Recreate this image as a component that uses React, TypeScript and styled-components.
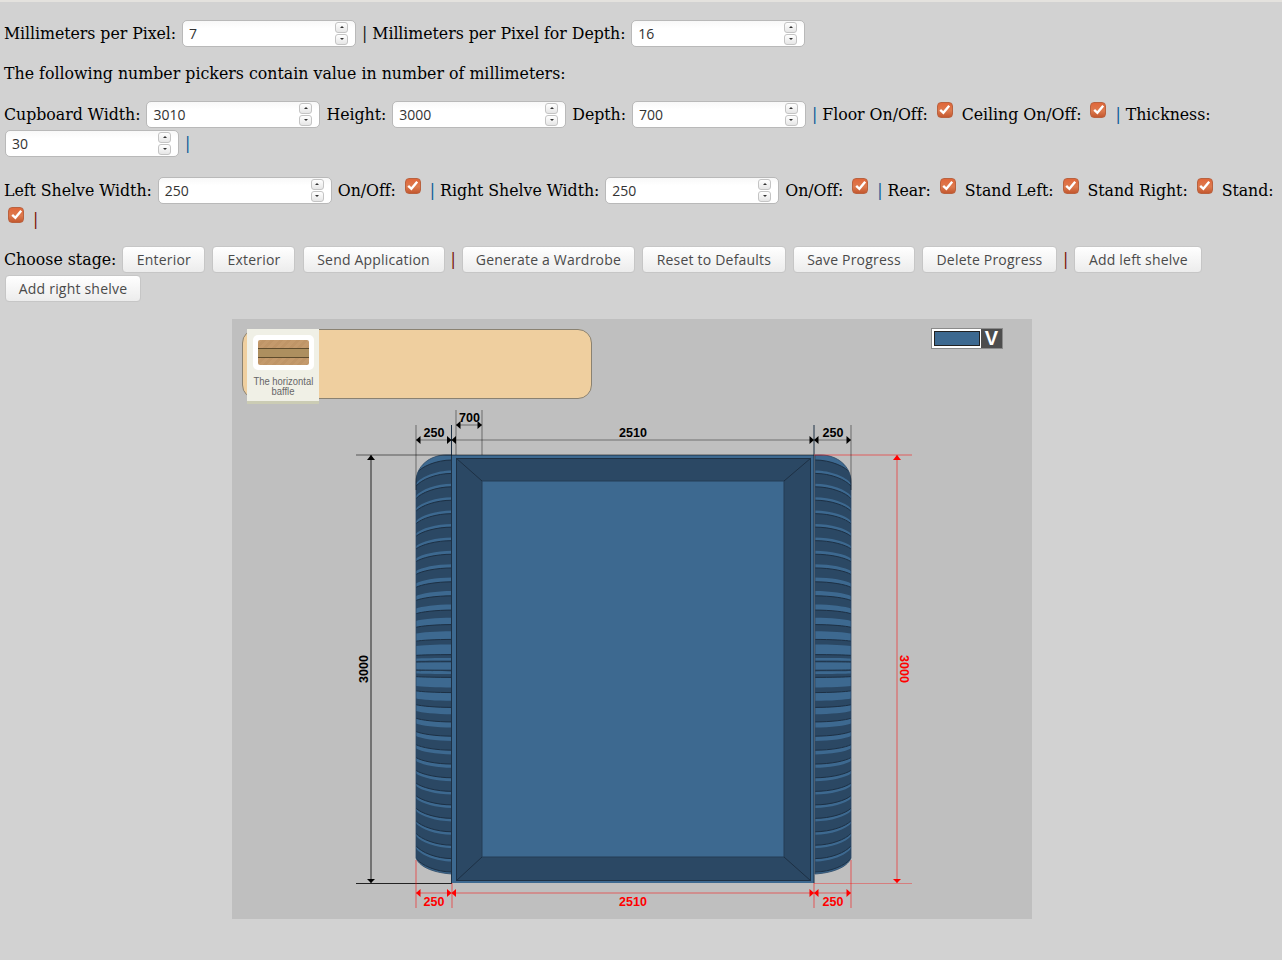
import React from "react";
import styled, { createGlobalStyle } from "styled-components";

const Global = createGlobalStyle`
  html, body { margin: 0; padding: 0; background: #d2d2d2; }
  body { border-top: 2px solid #e4e2de; }
`;

const Page = styled.div`
  min-height: 958px;
  padding: 17px 0 0 4px;
  box-sizing: border-box;
  font-family: "DejaVu Serif", serif;
  font-size: 15.8px;
  color: #000;
`;

const Row = styled.div<{ $gap: number; $track?: number }>`
  margin-bottom: ${(p) => p.$gap}px;
  line-height: 29px;
  letter-spacing: ${(p) => p.$track ?? 0}px;
`;

const Sep = styled.span<{ $tone?: "red" | "dark" }>`
  color: ${(p) => (p.$tone === "red" ? "#7a1408" : p.$tone === "dark" ? "#222" : "#0b5c99")};
`;

const Field = styled.span`
  display: inline-flex;
  align-items: center;
  justify-content: space-between;
  box-sizing: border-box;
  width: 174px;
  height: 27px;
  margin: 0 1px;
  padding: 2px 7px 0 6px;
  background: linear-gradient(#f8f8f8, #ffffff 30%);
  border: 1px solid #b9b9b9;
  border-radius: 5px;
  font-family: "Open Sans", sans-serif;
  font-size: 14px;
  line-height: 20px;
  letter-spacing: 0;
  color: #333;
`;

const Spin = styled.span`
  display: flex;
  flex-direction: column;
  gap: 1px;
  margin-top: -2px;
`;

const SpinBtn = styled.span`
  display: flex;
  align-items: center;
  justify-content: center;
  width: 13px;
  height: 11px;
  box-sizing: border-box;
  background: linear-gradient(#ffffff, #e6e6e6);
  border: 1px solid #c4c4c4;
  border-radius: 3px;
`;

const Arrow = styled.i<{ $down?: boolean }>`
  width: 0;
  height: 0;
  border-left: 2px solid transparent;
  border-right: 2px solid transparent;
  ${(p) => (p.$down ? "border-top: 2px solid #333;" : "border-bottom: 2px solid #333;")}
`;

const Check = styled.span`
  display: inline-flex;
  align-items: center;
  justify-content: center;
  box-sizing: border-box;
  width: 16px;
  height: 16px;
  margin: 0 4px;
  vertical-align: 4px;
  background: linear-gradient(#e0673a, #dd7a4e 55%, #c4582f);
  border: 1px solid #b9623f;
  border-radius: 4px;
`;

const Btn = styled.button<{ $w: number }>`
  box-sizing: border-box;
  width: ${(p) => p.$w}px;
  height: 27px;
  margin: 0 1px;
  padding: 0;
  background: linear-gradient(#ffffff, #ececec);
  border: 1px solid #c6c6c6;
  border-radius: 4px;
  font-family: "Open Sans", sans-serif;
  font-size: 14px;
  letter-spacing: 0.2px;
  color: #4a4a4a;
`;

const Stage = styled.div`
  position: relative;
  width: 800px;
  height: 600px;
  margin-left: 228px;
  background: #bfbfbf;
`;

const Drawing = styled.svg`
  display: block;
`;

const Palette = styled.div`
  position: absolute;
  left: 10px;
  top: 10px;
  width: 350px;
  height: 70px;
  box-sizing: border-box;
  background: #efcf9f;
  border: 1px solid #8a8272;
  border-radius: 14px;
`;

const PaletteItem = styled.div`
  position: absolute;
  left: 4px;
  top: -1px;
  width: 72px;
  height: 75px;
  box-sizing: border-box;
  padding-top: 6px;
  background: #f0f0e6;
  border-bottom: 3px solid #cbccb4;
`;

const Thumb = styled.div`
  width: 61px;
  height: 35px;
  box-sizing: border-box;
  margin-left: 6px;
  padding: 5px;
  background: #fff;
  border-radius: 5px;
`;

const Plank = styled.div`
  display: flex;
  flex-direction: column;
  justify-content: center;
  height: 25px;
  background: repeating-linear-gradient(135deg, #c49a6c 0 3px, #bf9567 3px 6px);
  border-radius: 2px;
`;

const PlankBand = styled.div`
  height: 8px;
  background: #ad8f5f;
  border-top: 1px solid #5e4b2c;
  border-bottom: 1px solid #5e4b2c;
`;

const PaletteLabel = styled.div`
  margin-top: 6px;
  width: 72px;
  font-family: "Liberation Sans", sans-serif;
  font-size: 11.5px;
  line-height: 10px;
  text-align: center;
  color: #666;
  transform: scaleX(0.82);
  white-space: nowrap;
`;

const Swatch = styled.div`
  position: absolute;
  left: 699px;
  top: 9px;
  display: flex;
  width: 72px;
  height: 21px;
  box-sizing: border-box;
  background: #fff;
  border: 1px solid #8a8a8a;
`;

const SwatchColor = styled.div`
  width: 46px;
  height: 15px;
  margin: 2px 0 0 2px;
  box-sizing: border-box;
  background: #3d6990;
  border: 1px solid #222;
`;

const SwatchToggle = styled.div`
  margin-left: auto;
  width: 21px;
  background: #4d4d4d;
  color: #fff;
  font-family: "Liberation Sans", sans-serif;
  font-weight: 700;
  font-size: 20px;
  line-height: 19px;
  text-align: center;
`;

const DimText = styled.text<{ $red?: boolean }>`
  font-family: "Liberation Sans", sans-serif;
  font-weight: 700;
  font-size: 12.5px;
  text-anchor: middle;
  fill: ${(p) => (p.$red ? "#f00" : "#000")};
`;

const NumberField = ({ value }: { value: string }) => (
  <Field>
    <span>{value}</span>
    <Spin>
      <SpinBtn><Arrow /></SpinBtn>
      <SpinBtn><Arrow $down /></SpinBtn>
    </Spin>
  </Field>
);

const Tick = () => (
  <Check>
    <svg width="13" height="13" viewBox="0 0 13 13">
      <path d="M2.2 6.8 L5.4 9.8 L11.2 2.8" fill="none" stroke="#fff" strokeWidth="2.4" />
    </svg>
  </Check>
);

const CX = 666;
const dropAt = (y: number) => (14 * (CX - y)) / (CX - 455);
const curve = (y: number) => {
  const drop = dropAt(y);
  return `452 ${y} C436 ${y} 421 ${y + drop * 0.5} 416 ${y + drop}`;
};
const back = (y: number) => {
  const drop = dropAt(y);
  return `C421 ${y + drop * 0.5} 436 ${y} 452 ${y}`;
};

const ribs = Array.from({ length: 16 }, (_, k) => {
  const y = 457 + 13.4 * k;
  const next = y + 13.4;
  const t = Math.min(1, (y - 457) / 205);
  const light = 3 + 10 * t * t * t * t;
  const top = y + light;
  return {
    fill: `M${curve(top)} L416 ${next + dropAt(next)} ${back(next)} Z`,
    line: `M${curve(top)}`,
  };
});

const shellPath = "M452 455 L446 455 C430 455 416 466 416 482 L416 858 C420 868 436 873 452 874 Z";

const ShelfStack = () => (
  <g>
    <path d={shellPath} fill="#3d6990" />
    <g clipPath="url(#shell)">
      {[0, 1].map((m) => (
        <g key={m} transform={m ? `translate(0 ${2 * CX}) scale(1 -1)` : undefined}>
          {ribs.map((r, i) => (
            <g key={i}>
              <path d={r.fill} fill="#2b4864" />
              <path d={r.line} fill="none" stroke="#1d3044" strokeWidth="1" />
            </g>
          ))}
        </g>
      ))}
    </g>
    <path d={shellPath} fill="none" stroke="#2b4864" strokeWidth="0.8" />
  </g>
);

const HArrow = ({ x, dir, c }: { x: number; dir: number; c: string }) => (
  <path d={`M${x} 0 l${dir * 4.5} -4 v8 Z`} fill={c} />
);

const HDim = ({ x1, x2, y, c, line }: { x1: number; x2: number; y: number; c: string; line: string }) => (
  <g transform={`translate(0 ${y})`}>
    <path d={`M${x1} 0 H${x2}`} stroke={line} strokeWidth="1.6" />
    <HArrow x={x1} dir={1} c={c} />
    <HArrow x={x2} dir={-1} c={c} />
  </g>
);

const VDim = ({ x, c, line }: { x: number; c: string; line: string }) => (
  <g>
    <path d={`M${x} 455 V883`} stroke={line} strokeWidth="1.6" />
    <path d={`M${x} 455 l-4 5 h8 Z`} fill={c} />
    <path d={`M${x} 883 l-4 -4 h8 Z`} fill={c} />
  </g>
);

const BLACK_LINE = "rgba(0,0,0,0.28)";
const RED_LINE = "rgba(255,0,0,0.34)";

const Wardrobe = () => (
  <Drawing width="800" height="600" viewBox="232 319 800 600">
    <defs>
      <clipPath id="shell"><path d={shellPath} /></clipPath>
    </defs>

    <ShelfStack />
    <g transform="translate(1267 0) scale(-1 1)"><ShelfStack /></g>

    <rect x="452" y="455" width="362" height="428" fill="#3d6990" />
    <rect x="456.5" y="458.5" width="354" height="422" fill="#2b4864" stroke="#1d3044" />
    <rect x="482" y="481" width="302" height="376" fill="#3d6990" stroke="#243d55" />
    <path d="M456 458 L482 481 M811 458 L784 481 M456 881 L482 857 M811 881 L784 857" stroke="#1d3044" fill="none" />
    <path d="M451.5 425 V883 M814 425 V883" stroke="#1d3044" />

    <path d="M356 455 H814" stroke="rgba(0,0,0,0.36)" strokeWidth="1.6" />
    <path d="M814 455 H912" stroke={RED_LINE} strokeWidth="1.6" />
    <path d="M356 883.5 H452" stroke="#222" />
    <path d="M814 883.5 H912" stroke={RED_LINE} />

    <path d="M416 425 V490 M851 425 V490 M456 410 V455 M482 410 V455" stroke={BLACK_LINE} strokeWidth="1.6" fill="none" />
    <path d="M416 860 V908 M452 883 V908 M814 883 V908 M851 860 V908" stroke={RED_LINE} strokeWidth="1.6" fill="none" />

    <HDim x1={416} x2={451.5} y={440} c="#000" line={BLACK_LINE} />
    <HDim x1={451.5} x2={814} y={440} c="#000" line={BLACK_LINE} />
    <HDim x1={814} x2={851} y={440} c="#000" line={BLACK_LINE} />
    <HDim x1={456} x2={482} y={425} c="#000" line={BLACK_LINE} />

    <HDim x1={416} x2={451.5} y={893} c="#f00" line={RED_LINE} />
    <HDim x1={451.5} x2={814} y={893} c="#f00" line={RED_LINE} />
    <HDim x1={814} x2={851} y={893} c="#f00" line={RED_LINE} />

    <VDim x={371} c="#000" line="rgba(0,0,0,0.5)" />
    <VDim x={897} c="#f00" line={RED_LINE} />

    <DimText x="434" y="437">250</DimText>
    <DimText x="633" y="437">2510</DimText>
    <DimText x="833" y="437">250</DimText>
    <DimText x="469.5" y="422">700</DimText>
    <DimText $red x="434" y="906">250</DimText>
    <DimText $red x="633" y="906">2510</DimText>
    <DimText $red x="833" y="906">250</DimText>
    <DimText x="0" y="0" transform="translate(368 669) rotate(-90)">3000</DimText>
    <DimText $red x="0" y="0" transform="translate(900 669) rotate(90)">3000</DimText>
  </Drawing>
);

export default function App() {
  return (
    <Page>
      <Global />
      <Row $gap={11} $track={-0.06}>
        Millimeters per Pixel: <NumberField value="7" /> <Sep $tone="dark">|</Sep> Millimeters per Pixel for Depth: <NumberField value="16" />
      </Row>
      <Row $gap={12}>The following number pickers contain value in number of millimeters:</Row>
      <Row $gap={18} $track={-0.04}>
        Cupboard Width: <NumberField value="3010" /> Height: <NumberField value="3000" /> Depth: <NumberField value="700" /> <Sep>|</Sep> Floor On/Off: <Tick /> Ceiling On/Off: <Tick /> <Sep>|</Sep> Thickness: <NumberField value="30" /> <Sep>|</Sep>
      </Row>
      <Row $gap={11} $track={-0.05}>
        Left Shelve Width: <NumberField value="250" /> On/Off: <Tick /> <Sep>|</Sep> Right Shelve Width: <NumberField value="250" /> On/Off: <Tick /> <Sep>|</Sep> Rear: <Tick /> Stand Left: <Tick /> Stand Right: <Tick /> Stand: <Tick /> <Sep $tone="red">|</Sep>
      </Row>
      <Row $gap={16}>
        Choose stage: <Btn $w={83}>Enterior</Btn> <Btn $w={83}>Exterior</Btn> <Btn $w={142}>Send Application</Btn> <Sep $tone="red">|</Sep> <Btn $w={173}>Generate a Wardrobe</Btn> <Btn $w={144}>Reset to Defaults</Btn> <Btn $w={122}>Save Progress</Btn> <Btn $w={135}>Delete Progress</Btn> <Sep $tone="red">|</Sep> <Btn $w={128}>Add left shelve</Btn> <Btn $w={136}>Add right shelve</Btn>
      </Row>
      <Stage>
        <Wardrobe />
        <Palette>
          <PaletteItem>
            <Thumb>
              <Plank><PlankBand /></Plank>
            </Thumb>
            <PaletteLabel>The horizontal<br />baffle</PaletteLabel>
          </PaletteItem>
        </Palette>
        <Swatch>
          <SwatchColor />
          <SwatchToggle>V</SwatchToggle>
        </Swatch>
      </Stage>
    </Page>
  );
}
